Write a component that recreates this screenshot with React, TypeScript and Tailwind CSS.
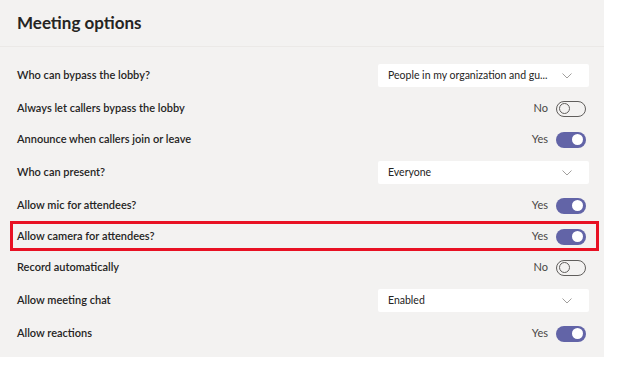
type Option =
  | { label: string; kind: "select"; value: string }
  | { label: string; kind: "toggle"; on: boolean; highlight?: boolean };

const options: Option[] = [
  { label: "Who can bypass the lobby?", kind: "select", value: "People in my organization and gu..." },
  { label: "Always let callers bypass the lobby", kind: "toggle", on: false },
  { label: "Announce when callers join or leave", kind: "toggle", on: true },
  { label: "Who can present?", kind: "select", value: "Everyone" },
  { label: "Allow mic for attendees?", kind: "toggle", on: true },
  { label: "Allow camera for attendees?", kind: "toggle", on: true, highlight: true },
  { label: "Record automatically", kind: "toggle", on: false },
  { label: "Allow meeting chat", kind: "select", value: "Enabled" },
  { label: "Allow reactions", kind: "toggle", on: true },
];

function Toggle({ on }: { on: boolean }) {
  return (
    <div className="flex items-center gap-2">
      <span className="text-[11px] text-[#484644]">{on ? "Yes" : "No"}</span>
      {on ? (
        <div className="w-[30px] h-[16px] rounded-full bg-[#6264a7] flex items-center justify-end px-[3px]">
          <div className="w-[11px] h-[11px] rounded-full bg-white" />
        </div>
      ) : (
        <div className="w-[30px] h-[16px] rounded-full border border-[#605e5c] flex items-center px-[2px]">
          <div className="w-[11px] h-[11px] rounded-full border-[1.5px] border-[#605e5c]" />
        </div>
      )}
    </div>
  );
}

function Select({ value }: { value: string }) {
  return (
    <div className="w-[211px] h-[23px] bg-white rounded-[2px] flex items-center justify-between pl-[10px] pr-[17px]">
      <span className="text-[10.5px] text-[#252423]">{value}</span>
      <svg width="10" height="6" viewBox="0 0 10 6" fill="none">
        <polyline points="0.5,0.5 5,5 9.5,0.5" stroke="#a19f9d" strokeWidth="1" />
      </svg>
    </div>
  );
}

export default function App() {
  return (
    <div className="w-[623px] h-[372px] bg-white" style={{ fontFamily: "Lato, 'Open Sans', sans-serif" }}>
      <div className="w-[604px] h-[357px] bg-[#f3f2f1] text-[#252423]">
        <div className="h-[47px] pl-[17px] flex items-center border-b border-[#ebe9e7]">
          <h1 className="text-[17px] font-bold">Meeting options</h1>
        </div>
        <div className="pt-[11px] pl-[17px] pr-[15px]">
          {options.map((o) => (
            <div
              key={o.label}
              className={`relative flex items-center justify-between ${o.kind === "select" ? "h-[35px]" : "h-[31px] pr-[3px]"}`}
            >
              {o.kind === "toggle" && o.highlight && (
                <div className="absolute left-[-7px] right-[-10px] top-[0px] bottom-[1px] border-[3px] border-[#e81123]" />
              )}
              <span className="text-[11px] font-semibold">{o.label}</span>
              {o.kind === "select" ? <Select value={o.value} /> : <Toggle on={o.on} />}
            </div>
          ))}
        </div>
      </div>
    </div>
  );
}
